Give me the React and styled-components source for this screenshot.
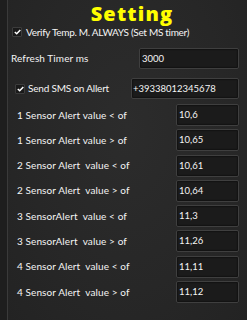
import React from "react";
import styled, { createGlobalStyle } from "styled-components";

const Global = createGlobalStyle`
  html, body { margin: 0; padding: 0; background: #1f1f1f; }
  body { width: 247px; height: 320px; overflow: hidden; font-family: Lato, "Liberation Sans", Arial, sans-serif; }
`;

const Page = styled.div`
  width: 247px;
  height: 320px;
  display: flex;
  background: #1e1e1e;
`;

const Panel = styled.div`
  margin-left: 7px;
  flex: 1;
  border-left: 1px solid #3a3a3a;
  background: radial-gradient(ellipse at 50% 40%, #2c2c2c 0%, #272727 60%, #232323 100%);
  display: flex;
  flex-direction: column;
  padding-right: 8px;
`;

const Title = styled.h1`
  margin: 4px 0 0 0;
  font-family: "Open Sans", "Liberation Sans", Arial, sans-serif;
  font-weight: 800;
  font-size: 20px;
  line-height: 19px;
  letter-spacing: 1.2px;
  color: #ffff00;
  text-align: center;
  padding-left: 17px;
`;

const CheckRow = styled.div`
  display: flex;
  align-items: center;
  gap: ${(p) => p.$gap || 6}px;
  height: ${(p) => p.$h || 12}px;
  padding-left: ${(p) => p.$indent}px;
  margin-top: ${(p) => p.$top || 0}px;
`;

const Box = styled.span`
  width: 8px;
  height: 8px;
  background: #1a1a1a;
  border: 1px solid #3c3c3c;
  border-radius: 1px;
  display: flex;
  align-items: center;
  justify-content: center;
  flex: none;
`;

const Label = styled.span`
  color: #f4f4f4;
  font-family: Lato, "Liberation Sans", Arial, sans-serif;
  font-size: ${(p) => p.$size || 10}px;
  letter-spacing: ${(p) => p.$ls || 0}px;
  line-height: 11px;
  white-space: pre;
`;

const FieldRow = styled.div`
  display: flex;
  align-items: center;
  justify-content: space-between;
  height: ${(p) => p.$h}px;
  margin-top: ${(p) => p.$top || 0}px;
  padding-left: ${(p) => p.$indent}px;
`;

const Field = styled.div`
  box-sizing: border-box;
  width: ${(p) => p.$w}px;
  height: ${(p) => p.$h || 21}px;
  background: #1b1b1b;
  border: 1px solid #3f3f3f;
  border-radius: 2px;
  color: #f4f4f4;
  font-family: Lato, "Liberation Sans", Arial, sans-serif;
  font-size: 9.5px;
  display: flex;
  align-items: center;
  padding-left: ${(p) => p.$pad || 2}px;
  padding-bottom: 1px;
  box-shadow: inset 0 0 2px #000;
`;

const SensorList = styled.div`
  display: flex;
  flex-direction: column;
  gap: 3.3px;
  margin-top: 5px;
`;

const Check = () => (
  <Box>
    <svg width="7" height="6" viewBox="0 0 7 6">
      <path d="M0.8 3 L2.7 4.8 L6.3 0.9" stroke="#fff" strokeWidth="1.5" fill="none" />
    </svg>
  </Box>
);

const sensors = [
  ["1 Sensor Alert value < of", "10,6"],
  ["1 Sensor Alert value > of", "10,65"],
  ["2 Sensor Alert  value < of", "10,61"],
  ["2 Sensor Alert  value > of", "10,64"],
  ["3 SensorAlert  value < of", "11,3"],
  ["3 SensorAlert  value > of", "11,26"],
  ["4 Sensor Alert  value < of", "11,11"],
  ["4 Sensor Alert  value > of", "11,12"],
];

export default function App() {
  return (
    <Page>
      <Global />
      <Panel>
        <Title>Setting</Title>
        <CheckRow $indent={4} $h={12} $gap={4} $top={3}>
          <Check />
          <Label $ls={-0.3}>Verify Temp. M. ALWAYS (Set MS timer)</Label>
        </CheckRow>
        <FieldRow $indent={3} $h={21} $top={10}>
          <Label $ls={0.1}>Refresh Timer ms</Label>
          <Field $w={100}>3000</Field>
        </FieldRow>
        <FieldRow $indent={7} $h={21} $top={9}>
          <CheckRow $indent={0} $h={21} $gap={3}>
            <Check />
            <Label $ls={-0.2}>Send SMS on Allert</Label>
          </CheckRow>
          <Field $w={108} $pad={1}>+39338012345678</Field>
        </FieldRow>
        <SensorList>
          {sensors.map(([l, v]) => (
            <FieldRow key={l} $indent={9} $h={22}>
              <Label $ls={0.1}>{l}</Label>
              <Field $w={63} $h={22}>{v}</Field>
            </FieldRow>
          ))}
        </SensorList>
      </Panel>
    </Page>
  );
}
